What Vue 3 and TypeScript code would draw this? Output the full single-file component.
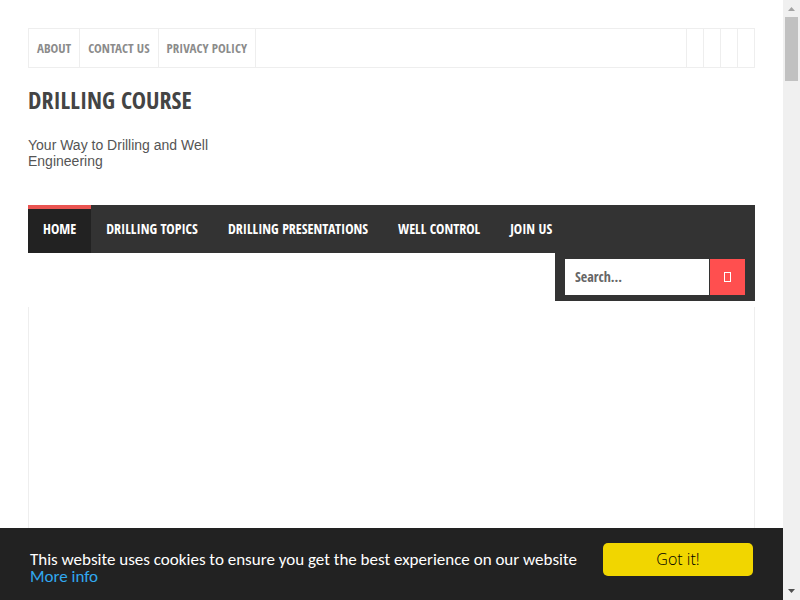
<script setup lang="ts">
import { ref } from 'vue'

interface NavLink {
  label: string
  active?: boolean
}

const topLinks: NavLink[] = [
  { label: 'About' },
  { label: 'Contact Us' },
  { label: 'Privacy Policy' },
]

const mainLinks: NavLink[] = [
  { label: 'Home', active: true },
  { label: 'Drilling Topics' },
  { label: 'Drilling Presentations' },
  { label: 'Well Control' },
  { label: 'Join Us' },
]

const socialLinks: string[] = ['Facebook', 'Twitter', 'Google Plus', 'RSS']

const query = ref('')
const cookieBarVisible = ref(true)
</script>

<template>
  <div class="window">
    <div class="page">
      <div class="wrapper">
        <nav class="top-nav" aria-label="Pages">
          <ul class="top-links">
            <li v-for="link in topLinks" :key="link.label">
              <a href="#">{{ link.label }}</a>
            </li>
          </ul>
          <ul class="social">
            <li v-for="name in socialLinks" :key="name">
              <a href="#" :aria-label="name"></a>
            </li>
          </ul>
        </nav>

        <header class="header">
          <h1><a href="#">Drilling Course</a></h1>
          <p>Your Way to Drilling and Well Engineering</p>
        </header>

        <nav class="main-nav" aria-label="Main">
          <a
            v-for="link in mainLinks"
            :key="link.label"
            href="#"
            :class="{ active: link.active }"
          >{{ link.label }}</a>
        </nav>

        <form class="search" @submit.prevent>
          <input v-model="query" type="text" placeholder="Search..." aria-label="Search" />
          <button type="submit" aria-label="Submit search">
            <svg width="7" height="10" viewBox="0 0 7 10" aria-hidden="true">
              <rect x="0.5" y="0.5" width="6" height="9" fill="none" stroke="#fff" />
            </svg>
          </button>
        </form>

        <main class="content"></main>
      </div>

      <div v-if="cookieBarVisible" class="cookie-bar">
        <p>
          This website uses cookies to ensure you get the best experience on our website
          <a href="#">More info</a>
        </p>
        <button type="button" @click="cookieBarVisible = false">Got it!</button>
      </div>
    </div>

    <div class="scrollbar" aria-hidden="true">
      <svg width="17" height="17" viewBox="0 0 17 17">
        <path d="M5 11h7L8.500 7z" fill="#a3a3a3" />
      </svg>
      <div class="thumb"></div>
      <svg class="down" width="17" height="17" viewBox="0 0 17 17">
        <path d="M5 6h7L8.500 10z" fill="#505050" />
      </svg>
    </div>
  </div>
</template>

<style>
body {
  background: #fff;
}
</style>

<style scoped>
.window {
  --condensed: "Open Sans Condensed", "Liberation Sans Narrow", "Open Sans", sans-serif;
  display: flex;
  min-height: 100vh;
}

a {
  color: inherit;
  text-decoration: none;
}

ul {
  display: flex;
  list-style: none;
  margin: 0;
  padding: 0;
}

.page {
  flex: 1;
  min-width: 0;
  display: flex;
  flex-direction: column;
}

.wrapper {
  flex: 1;
  display: flex;
  flex-direction: column;
  padding: 28px 28px 0;
}

.top-nav {
  display: flex;
  justify-content: space-between;
  border: 1px solid #eee;
  font: 700 13px/38px var(--condensed);
  text-transform: uppercase;
  color: #8b8b8b;
}

.top-links a {
  display: block;
  padding: 0 8px;
  border-right: 1px solid #eee;
}

.social a {
  display: block;
  width: 16px;
  height: 38px;
  border-left: 1px solid #eee;
}

.header {
  width: 220px;
  padding: 16px 0 36px;
}

.header h1 {
  margin: 0 0 22px;
  font: 700 24px/31px var(--condensed);
  text-transform: uppercase;
  white-space: nowrap;
  color: #444;
}

.header p {
  margin: 0;
  font: 14px/16px "Liberation Sans", sans-serif;
  color: #555;
}

.main-nav {
  display: flex;
  background: #333;
  font: 700 14px/40px var(--condensed);
  text-transform: uppercase;
  white-space: nowrap;
  color: #fff;
}

.main-nav a {
  padding: 4px 15px;
}

.main-nav .active {
  padding-top: 0;
  border-top: 4px solid #ea5451;
  background: #222;
}

.search {
  align-self: flex-end;
  box-sizing: border-box;
  display: flex;
  align-items: center;
  gap: 1px;
  width: 200px;
  height: 48px;
  padding: 0 10px;
  background: #333;
}

.search input {
  flex: 1;
  min-width: 0;
  box-sizing: border-box;
  height: 36px;
  padding: 0 10px 2px;
  border: 0;
  background: #fff;
  font: 700 14px/20px var(--condensed);
  color: #666;
}

.search input::placeholder {
  color: #666;
  opacity: 1;
}

.search button {
  display: flex;
  align-items: center;
  justify-content: center;
  width: 35px;
  height: 36px;
  padding: 0;
  border: 0;
  background: #ff4f4f;
}

.content {
  flex: 1;
  margin-top: 6px;
  border: solid #eee;
  border-width: 0 1px;
}

.cookie-bar {
  display: flex;
  align-items: flex-start;
  gap: 16px;
  min-height: 57px;
  padding: 15px 30px 0;
  background: #222;
}

.cookie-bar p {
  flex: 1;
  margin: 0;
  padding-top: 8px;
  font: 17px/17px Carlito, "Noto Sans", sans-serif;
  color: #fff;
}

.cookie-bar p a {
  color: #31a8f0;
}

.cookie-bar button {
  width: 150px;
  height: 33px;
  padding: 0;
  border: 0;
  border-radius: 5px;
  background: #f1d600;
  font: 300 16px/33px "Open Sans", "Noto Sans", sans-serif;
  color: #000;
}

.scrollbar {
  display: flex;
  flex-direction: column;
  width: 17px;
  background: #f0f0f0;
}

.thumb {
  height: 64px;
  margin: 0 2px;
  background: #c1c1c1;
}

.down {
  margin-top: auto;
}
</style>
